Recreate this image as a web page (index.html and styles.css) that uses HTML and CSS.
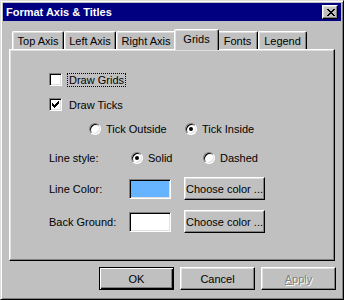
FILE: index.html
```html
<!DOCTYPE html>
<html lang="en">
<head>
    <meta charset="UTF-8">
    <title>Format Axis &amp; Titles</title>
    <link rel="stylesheet" href="styles.css">
</head>
<body>
    <div class="dialog">
        <div class="titlebar">
            <span class="title">Format Axis &amp; Titles</span>
            <button class="close">
                <svg width="8" height="7" viewBox="0 0 8 7"><path d="M0 0h2v1h-2z M6 0h2v1h-2z M1 1h2v1h-2z M5 1h2v1h-2z M2 2h4v1h-4z M3 3h2v1h-2z M2 4h4v1h-4z M1 5h2v1h-2z M5 5h2v1h-2z M0 6h2v1h-2z M6 6h2v1h-2z" fill="#000"/></svg>
            </button>
        </div>

        <div class="content">
            <div class="tabs">
                <div class="tab tab-top">Top Axis</div>
                <div class="tab tab-left">Left Axis</div>
                <div class="tab tab-right">Right Axis</div>
                <div class="tab tab-grids active">Grids</div>
                <div class="tab tab-fonts">Fonts</div>
                <div class="tab tab-legend">Legend</div>
            </div>

            <div class="panel">
                <div class="row check-row">
                    <span class="box"></span>
                    <span class="label focus">Draw Grids</span>
                </div>
                <div class="row check-row second">
                    <span class="box">
                        <svg width="7" height="7" viewBox="0 0 7 7"><path d="M0 2h1v1h1v1h1v-1h1v-1h1v-1h1v-1h1v3h-1v1h-1v1h-1v1h-1v1h-1v-1h-1v-1h-1z" fill="#000"/></svg>
                    </span>
                    <span class="label">Draw Ticks</span>
                </div>
                <div class="row tick-row">
                    <span class="option wide"><span class="radio"></span>Tick Outside</span>
                    <span class="option"><span class="radio on"></span>Tick Inside</span>
                </div>
                <div class="row style-row">
                    <span class="field">Line style:</span>
                    <span class="option solid"><span class="radio on"></span>Solid</span>
                    <span class="option"><span class="radio"></span>Dashed</span>
                </div>
                <div class="row color-row">
                    <span class="field">Line Color:</span>
                    <span class="swatch" style="background: #66b3ff;"></span>
                    <button class="btn choose">Choose color ...</button>
                </div>
                <div class="row color-row last">
                    <span class="field">Back Ground:</span>
                    <span class="swatch" style="background: #ffffff;"></span>
                    <button class="btn choose">Choose color ...</button>
                </div>
            </div>

            <div class="actions">
                <button class="btn action default">OK</button>
                <button class="btn action">Cancel</button>
                <button class="btn action disabled"><u>A</u>pply</button>
            </div>
        </div>
    </div>
</body>
</html>
```

FILE: styles.css
```css
body {
    margin: 0;
    background: #c0c0c0;
    font-family: "Liberation Sans", Arial, sans-serif;
    font-size: 11px;
    color: #000;
}
.dialog {
    width: 344px;
    height: 300px;
    box-sizing: border-box;
    background: #c0c0c0;
    border: 1px solid;
    border-color: #dfdfdf #000 #000 #dfdfdf;
    box-shadow: inset 1px 1px #fff, inset -1px -1px #808080;
    padding: 2px;
}
.titlebar {
    height: 18px;
    background: #000080;
    display: flex;
    align-items: center;
    justify-content: space-between;
    padding: 0 3px;
}
.title {
    color: #fff;
    font-weight: bold;
    font-size: 11px;
}
.close {
    width: 16px;
    height: 14px;
    padding: 0 0 0 1px;
    margin: 0;
    background: #c0c0c0;
    border: 1px solid;
    border-color: #fff #000 #000 #fff;
    box-shadow: inset -1px -1px #808080, inset 1px 1px #dfdfdf;
    display: flex;
    align-items: center;
    justify-content: center;
}
.close svg {
    display: block;
}
.content {
    padding: 0 6px;
}

/* tab strip */
.tabs {
    display: flex;
    align-items: flex-end;
    height: 20px;
    margin-top: 8px;
    padding-left: 3px;
}
.tab {
    height: 18px;
    box-sizing: border-box;
    background: #c0c0c0;
    border-top: 1px solid #fff;
    border-left: 1px solid #fff;
    border-right: 1px solid #000;
    border-radius: 2px 2px 0 0;
    box-shadow: inset -1px 0 #808080, inset 1px 1px #dfdfdf;
    text-align: center;
    line-height: 16px;
    padding-top: 1px;
}
.tab-top { width: 52px; }
.tab-left { width: 52px; }
.tab-right { width: 60px; }
.tab-grids { width: 45px; }
.tab-fonts { width: 41px; }
.tab-legend { width: 49px; }
.tab.active {
    height: 21px;
    margin: 0 -2px -1px;
    position: relative;
    z-index: 1;
    padding-top: 0;
    line-height: 18px;
}

/* grid page */
.panel {
    height: 212px;
    box-sizing: border-box;
    border: 1px solid;
    border-color: #fff #000 #000 #fff;
    box-shadow: inset -1px -1px #808080, inset 1px 1px #dfdfdf;
    padding: 23px 0 0 39px;
}
.row {
    display: flex;
    align-items: center;
}
.check-row {
    height: 13px;
}
.check-row.second {
    margin-top: 12px;
}
.box {
    width: 13px;
    height: 13px;
    box-sizing: border-box;
    background: #fff;
    border: 1px solid;
    border-color: #808080 #fff #fff #808080;
    box-shadow: inset 1px 1px #000, inset -1px -1px #dfdfdf;
    display: flex;
    align-items: center;
    justify-content: center;
}
.box svg {
    display: block;
}
.label {
    margin-left: 5px;
    padding: 0 1px;
    border: 1px solid transparent;
    line-height: 12px;
}
.label.focus {
    border: 1px dotted #000;
}
.tick-row {
    height: 12px;
    margin-top: 12px;
    padding-left: 40px;
}
.option {
    display: flex;
    align-items: center;
    gap: 5px;
}
.option.wide {
    width: 96px;
}
.radio {
    width: 12px;
    height: 12px;
    box-sizing: border-box;
    border-radius: 50%;
    background: #fff;
    border: 1px solid;
    border-color: #808080 #fff #fff #808080;
    box-shadow: inset 1px 1px #000, inset -1px -1px #dfdfdf;
    display: flex;
    align-items: center;
    justify-content: center;
}
.radio.on::after {
    content: "";
    width: 4px;
    height: 4px;
    border-radius: 50%;
    background: #000;
}
.style-row {
    height: 12px;
    margin-top: 17px;
}
.field {
    width: 80px;
}
.option.solid {
    width: 72px;
    margin-left: 2px;
}
.color-row {
    height: 23px;
    margin-top: 13px;
}
.color-row.last {
    margin-top: 10px;
}
.swatch {
    width: 42px;
    height: 20px;
    box-sizing: border-box;
    border: 1px solid;
    border-color: #808080 #fff #fff #808080;
    box-shadow: inset 1px 1px #000, inset -1px -1px #dfdfdf;
    margin-right: 13px;
}

/* buttons */
.btn {
    font-family: "Liberation Sans", Arial, sans-serif;
    font-size: 11px;
    color: #000;
    background: #c0c0c0;
    border: 1px solid;
    border-color: #fff #000 #000 #fff;
    box-shadow: inset -1px -1px #808080, inset 1px 1px #dfdfdf;
    padding: 0;
    margin: 0;
    height: 23px;
}
.choose {
    width: 81px;
}
.actions {
    display: flex;
    justify-content: flex-end;
    gap: 6px;
    margin-top: 6px;
    margin-right: -1px;
}
.action {
    width: 75px;
}
.action.default {
    border-color: #000;
    box-shadow: inset 1px 1px #fff, inset -1px -1px #000, inset -2px -2px #808080;
}
.action.disabled {
    color: #808080;
    text-shadow: 1px 1px #fff;
}
```
